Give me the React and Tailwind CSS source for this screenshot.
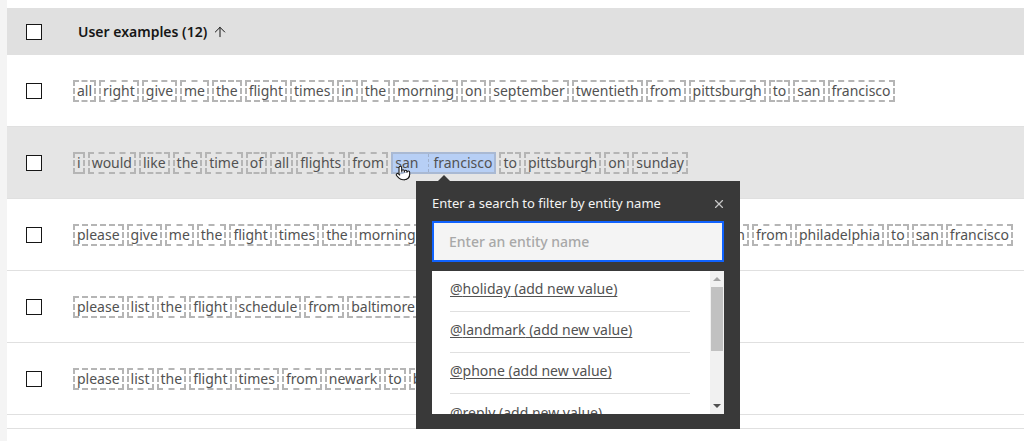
import { ArrowUp, Pointer, X } from "lucide-react";

const rows = [
  "all right give me the flight times in the morning on september twentieth from pittsburgh to san francisco",
  null,
  "please give me the flight times the morning on september twentieth departing at noon from philadelphia to san francisco",
  "please list the flight schedule from baltimore to san francisco",
  "please list the flight times from newark to boston",
];

const entities = ["holiday", "landmark", "phone", "reply"];

function Checkbox() {
  return <div className="w-4 h-4 border-[1.5px] border-[#161616] bg-white shrink-0" />;
}

function Token({ word }) {
  return (
    <span className="border-2 border-dashed border-[#b5b5b5] px-[2px] leading-[18px] text-[#525252]">
      {word}
    </span>
  );
}

function Row({ text, hover, children }) {
  return (
    <div
      className={`h-[72px] flex items-center border-b border-[#e0e0e0] ${
        hover ? "bg-[#e5e5e5]" : "bg-white"
      }`}
    >
      <div className="w-[66px] pl-[19px] shrink-0">
        <Checkbox />
      </div>
      <div className="flex items-center gap-[3px] whitespace-nowrap">
        {children || text.split(" ").map((w, i) => <Token key={i} word={w} />)}
      </div>
    </div>
  );
}

export default function App() {
  const hovered = "i would like the time of all flights from".split(" ");
  const after = "to pittsburgh on sunday".split(" ");

  return (
    <div
      className="relative flex w-[1024px] h-[441px] overflow-hidden bg-white text-[14px]"
      style={{ fontFamily: '"Noto Sans", "Open Sans", sans-serif' }}
    >
      <div className="w-[7px] shrink-0 bg-[#f4f4f4]" />
      <div className="flex-1 pt-[8px]">
        <div className="h-[47px] bg-[#e0e0e0] flex items-center">
          <div className="w-[71px] pl-[19px] shrink-0">
            <Checkbox />
          </div>
          <span className="font-semibold text-[#161616] text-[14px]">User examples (12)</span>
          <ArrowUp size={16} strokeWidth={1.5} className="ml-[5px] text-[#161616]" />
        </div>

        <Row text={rows[0]} />
        <Row hover>
          {hovered.map((w, i) => (
            <Token key={i} word={w} />
          ))}
          <span className="relative flex gap-[10px] border-2 border-[#a9b9d3] bg-[#b7cff5] px-[2px] leading-[18px] text-[#525252]">
            <span>san</span>
            <span className="border-l border-dashed border-[#9fb0cc] pl-[4px]">francisco</span>
            <Pointer
              size={16}
              className="absolute left-[2px] top-[11px] fill-white text-[#161616]"
              strokeWidth={1.6}
            />
          </span>
          {after.map((w, i) => (
            <Token key={i} word={w} />
          ))}
        </Row>
        <Row text={rows[2]} />
        <Row text={rows[3]} />
        <Row text={rows[4]} />
        <div className="h-[14px] border-b border-[#e0e0e0]" />
      </div>

      {/* entity popover */}
      <div className="absolute left-[416px] top-[181px] w-[324px] h-[248px] bg-[#393939] px-4 pt-[13px]">
        <div className="absolute -top-[6px] left-[22px] w-0 h-0 border-x-[6px] border-x-transparent border-b-[6px] border-b-[#393939]" />
        <div className="flex items-center justify-between h-[20px] text-[13px] text-[#f4f4f4]">
          <span>Enter a search to filter by entity name</span>
          <X size={14} className="text-[#c6c6c6] -mr-[2px]" />
        </div>
        <div className="mt-[7px] h-[41px] border-2 border-[#0f62fe] bg-[#f4f4f4] flex items-center pl-[15px] text-[14px] font-medium text-[#a8a8a8]">
          Enter an entity name
        </div>
        <div className="mt-[9px] h-[143px] bg-white flex overflow-hidden">
          <div className="flex-1 pl-[18px] pr-[20px]">
            {entities.map((e, i) => (
              <div
                key={e}
                className={`h-[41px] flex items-center pb-[5px] text-[#525252] underline underline-offset-2 ${
                  i < 3 ? "border-b border-[#e0e0e0]" : ""
                }`}
              >
                @{e} (add new value)
              </div>
            ))}
          </div>
          <div className="w-[14px] bg-[#f1f1f1] flex flex-col items-center">
            <div className="h-[16px] flex items-center">
              <div className="w-0 h-0 border-x-[4px] border-x-transparent border-b-[4px] border-b-[#a3a3a3]" />
            </div>
            <div className="w-[12px] h-[64px] bg-[#c1c1c1]" />
            <div className="flex-1" />
            <div className="h-[16px] flex items-center">
              <div className="w-0 h-0 border-x-[4px] border-x-transparent border-t-[4px] border-t-[#505050]" />
            </div>
          </div>
        </div>
      </div>
    </div>
  );
}
